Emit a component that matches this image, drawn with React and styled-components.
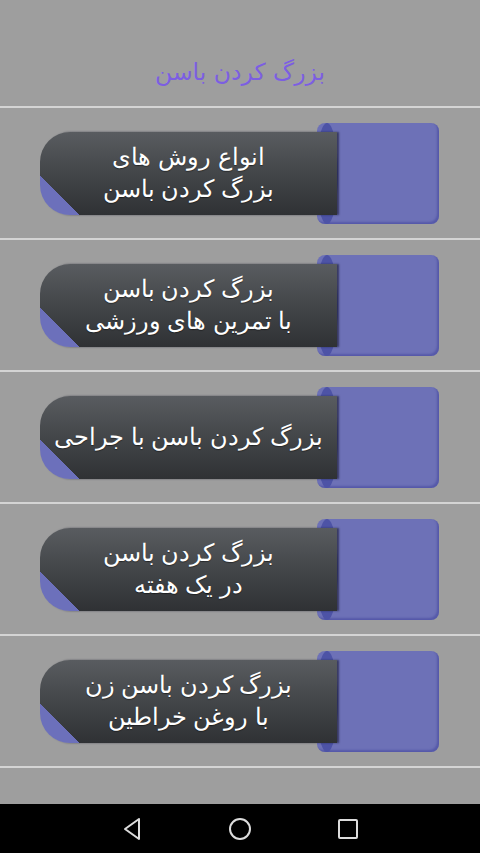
import React from 'react'
import styled, { createGlobalStyle } from 'styled-components'

const GlobalStyle = createGlobalStyle`
  html, body {
    margin: 0;
    padding: 0;
    background: #9e9e9e;
  }
  body {
    font-family: "DejaVu Sans", "Noto Sans", sans-serif;
  }
`

const Screen = styled.div`
  width: 480px;
  height: 853px;
  display: flex;
  flex-direction: column;
  background: #9e9e9e;
  overflow: hidden;
`

const Header = styled.header`
  height: 108px;
  display: flex;
  align-items: center;
  justify-content: center;
  padding-top: 38px;
  box-sizing: border-box;
  border-bottom: 2px solid #d4d4d4;
`

const Title = styled.h1`
  margin: 0;
  font-size: 23.5px;
  font-weight: normal;
  color: #7c5ee2;
  direction: rtl;
`

const List = styled.div`
  flex: 1;
  display: flex;
  flex-direction: column;
`

const Row = styled.div`
  height: 130px;
  display: flex;
  align-items: center;
  justify-content: center;
  border-bottom: 2px solid #d4d4d4;
`

const MenuButton = styled.button`
  width: 400px;
  display: flex;
  align-items: center;
  padding: 0;
  margin: 0;
  background: none;
  border: none;
  cursor: pointer;
`

const Bar = styled.div`
  position: relative;
  z-index: 1;
  flex: 0 0 297px;
  height: 83px;
  box-sizing: border-box;
  border-radius: 30px 0 0 30px;
  background:
    linear-gradient(45deg, #6c70bb 0 28px, transparent 28px),
    linear-gradient(180deg, #595c60 0%, #45484b 45%, #2f3134 100%);
  box-shadow: 2px 0 2px rgba(20, 20, 40, 0.6);
  display: flex;
  align-items: center;
  justify-content: center;
`

const Label = styled.span`
  direction: rtl;
  color: #ffffff;
  font-size: 23.5px;
  line-height: 32px;
  text-align: center;
  white-space: pre-line;
  text-shadow: 0 1px 1px rgba(0, 0, 0, 0.4);
`

const Tab = styled.div`
  position: relative;
  flex: 0 0 122px;
  height: 101px;
  margin-left: -20px;
  border-radius: 8px;
  background: #6d71b7;
  box-shadow: inset -2px -2px 2px rgba(70, 74, 160, 0.6);

  &::before {
    content: '';
    position: absolute;
    left: -1px;
    top: 0;
    width: 22px;
    height: 101px;
    border-radius: 50%;
    background: #4d53a6;
  }
`

const NavBar = styled.nav`
  height: 49px;
  background: #000;
  display: flex;
  align-items: center;
  justify-content: center;
  gap: 82px;
`

const NavIcon = styled.svg`
  width: 26px;
  height: 26px;
  fill: none;
  stroke: #dcdcdc;
  stroke-width: 2;
  stroke-linejoin: round;
`

const items = [
  'انواع روش های\nبزرگ کردن باسن',
  'بزرگ کردن باسن\nبا تمرین های ورزشی',
  'بزرگ کردن باسن با جراحی',
  'بزرگ کردن باسن\nدر یک هفته',
  'بزرگ کردن باسن زن\nبا روغن خراطین',
]

const App = () => {
  return (
    <Screen>
      <GlobalStyle />
      <Header>
        <Title>بزرگ کردن باسن</Title>
      </Header>
      <List>
        {items.map((text) => (
          <Row key={text}>
            <MenuButton>
              <Bar>
                <Label>{text}</Label>
              </Bar>
              <Tab />
            </MenuButton>
          </Row>
        ))}
      </List>
      <NavBar>
        <NavIcon viewBox="0 0 26 26">
          <path d="M20 3 L6 13 L20 23 Z" />
        </NavIcon>
        <NavIcon viewBox="0 0 26 26">
          <circle cx="13" cy="13" r="10" />
        </NavIcon>
        <NavIcon viewBox="0 0 26 26">
          <rect x="4" y="4" width="18" height="18" rx="1" />
        </NavIcon>
      </NavBar>
    </Screen>
  )
}

export default App
